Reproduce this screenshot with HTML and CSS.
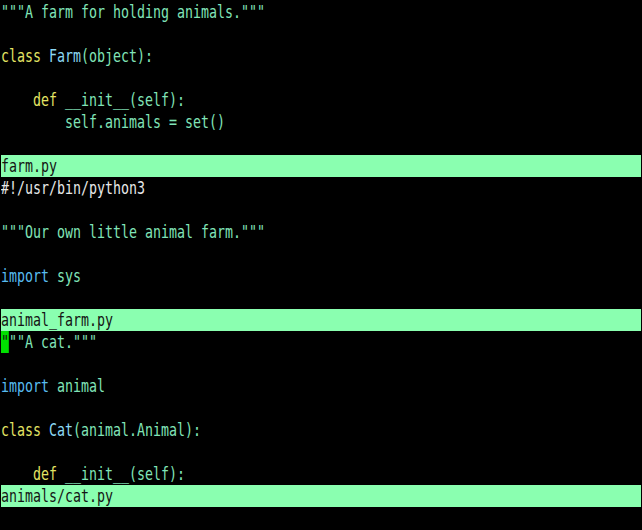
FILE: index.html
```html
<!DOCTYPE html>
<html>
<head>
<meta charset="utf-8">
<link rel="stylesheet" href="styles.css">
</head>
<body>
<div class="term">
  <div class="line"><span class="t">"""A farm for holding animals."""</span></div>
  <div class="line"></div>
  <div class="line"><span class="t"><span class="kw">class</span> <span class="cls">Farm</span>(object):</span></div>
  <div class="line"></div>
  <div class="line"><span class="t">    <span class="kw">def</span> __init__(self):</span></div>
  <div class="line"><span class="t">        self.animals = set()</span></div>
  <div class="line"></div>
  <div class="line status"><span class="t">farm.py</span></div>
  <div class="line plain"><span class="t">#!/usr/bin/python3</span></div>
  <div class="line"></div>
  <div class="line"><span class="t">"""Our own little animal farm."""</span></div>
  <div class="line"></div>
  <div class="line"><span class="t"><span class="imp">import</span> sys</span></div>
  <div class="line"></div>
  <div class="line status"><span class="t">animal_farm.py</span></div>
  <div class="line"><span class="t"><span class="cursor">"</span>""A cat."""</span></div>
  <div class="line"></div>
  <div class="line"><span class="t"><span class="imp">import</span> animal</span></div>
  <div class="line"></div>
  <div class="line"><span class="t"><span class="kw">class</span> <span class="cls">Cat</span>(animal.Animal):</span></div>
  <div class="line"></div>
  <div class="line"><span class="t">    <span class="kw">def</span> __init__(self):</span></div>
  <div class="line status"><span class="t">animals/cat.py</span></div>
  <div class="line"></div>
</div>
</body>
</html>
```
FILE: styles.css
```css
html, body {
  margin: 0;
  padding: 0;
  background: #000000;
}
.term {
  width: 642px;
  height: 530px;
  padding: 1px 0 0 1px;
  box-sizing: border-box;
  background: #000000;
  font-family: "DejaVu Sans Mono", monospace;
  font-size: 17px;
  color: #80e4b8;
  overflow: hidden;
}
.line {
  height: 22px;
  line-height: 22px;
  white-space: pre;
  width: 640px;
}
.t {
  display: inline-block;
  height: 22px;
  vertical-align: top;
  transform: scaleX(0.7817);
  transform-origin: left top;
}
.status {
  background: #8affb0;
  color: #141414;
}
.plain {
  color: #e8e8e8;
}
.kw {
  color: #e4e464;
}
.cls {
  color: #8cd8f4;
}
.imp {
  color: #58bcf0;
}
.cursor {
  background: #00e000;
  color: #101010;
  display: inline-block;
  height: 22px;
  vertical-align: top;
}
```
